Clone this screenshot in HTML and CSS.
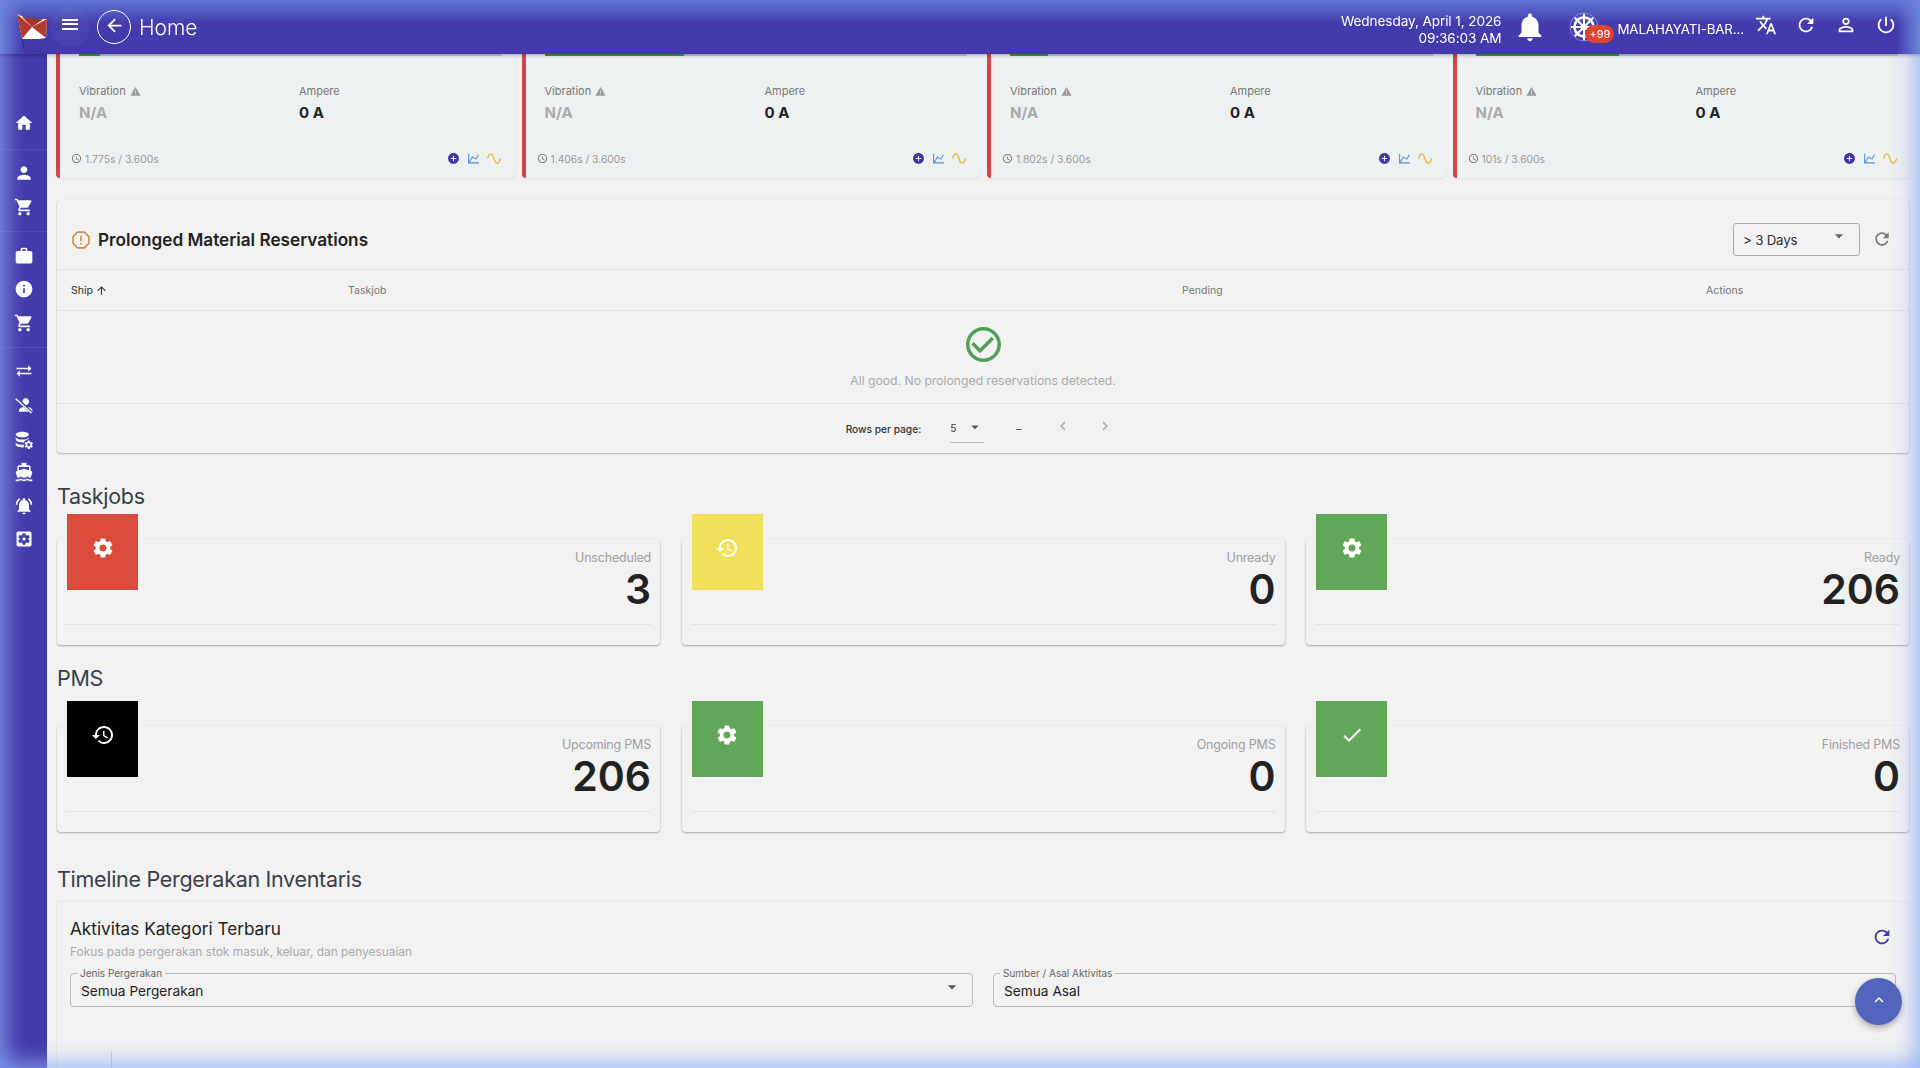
FILE: index.html
```html
<!DOCTYPE html>
<html lang="en">
<head>
    <meta charset="UTF-8">
    <meta name="viewport" content="width=device-width, initial-scale=1.0">
    <title>Home</title>
    <link rel="stylesheet" href="styles.css">
</head>
<body>

    <svg class="icon-sprite" width="0" height="0">
        <symbol id="i-home" viewBox="0 0 24 24"><path d="M10 20v-6h4v6h5v-8h3L12 3 2 12h3v8z"/></symbol>
        <symbol id="i-person" viewBox="0 0 24 24"><path d="M12 12c2.21 0 4-1.79 4-4s-1.79-4-4-4-4 1.79-4 4 1.79 4 4 4zm0 2c-2.67 0-8 1.34-8 4v2h16v-2c0-2.66-5.33-4-8-4z"/></symbol>
        <symbol id="i-cart" viewBox="0 0 24 24"><path d="M7 18c-1.1 0-1.99.9-1.99 2S5.9 22 7 22s2-.9 2-2-.9-2-2-2zM1 2v2h2l3.6 7.59-1.35 2.45c-.16.28-.25.61-.25.96 0 1.1.9 2 2 2h12v-2H7.42c-.14 0-.25-.11-.25-.25l.03-.12.9-1.63h7.45c.75 0 1.41-.41 1.75-1.03l3.58-6.49c.08-.14.12-.31.12-.48 0-.55-.45-1-1-1H5.21l-.94-2H1zm16 16c-1.1 0-1.99.9-1.99 2s.89 2 1.99 2 2-.9 2-2-.9-2-2-2z"/></symbol>
        <symbol id="i-work" viewBox="0 0 24 24"><path d="M20 6h-4V4c0-1.11-.89-2-2-2h-4c-1.11 0-2 .89-2 2v2H4c-1.11 0-1.99.89-1.99 2L2 19c0 1.11.89 2 2 2h16c1.11 0 2-.89 2-2V8c0-1.11-.89-2-2-2zm-6 0h-4V4h4v2z"/></symbol>
        <symbol id="i-info" viewBox="0 0 24 24"><path d="M12 2C6.48 2 2 6.48 2 12s4.48 10 10 10 10-4.48 10-10S17.52 2 12 2zm1 15h-2v-6h2v6zm0-8h-2V7h2v2z"/></symbol>
        <symbol id="i-swap" viewBox="0 0 24 24"><path d="M6.99 11L3 15l3.99 4v-3H21v-2H6.99v-3zM21 9l-3.99-4v3H3v2h14.01v3L21 9z"/></symbol>
        <symbol id="i-person-off" viewBox="0 0 24 24"><path d="M14 12c2.21 0 4-1.79 4-4s-1.79-4-4-4-4 1.79-4 4 1.79 4 4 4zm0 2c-2.67 0-8 1.34-8 4v2h16v-2c0-2.66-5.33-4-8-4z"/><path d="M3 4l18 17" stroke="#443aab" stroke-width="3.6"/><path d="M2 4.5l19 17" stroke="#fff" stroke-width="1.7"/></symbol>
        <symbol id="i-db-cog" viewBox="0 0 24 24"><path d="M10 2C5.6 2 2 3.6 2 5.5S5.6 9 10 9s8-1.6 8-3.5S14.4 2 10 2zM2 8v3.5C2 13.4 5.6 15 10 15c.7 0 1.4 0 2-.1.5-1.500 1.700-2.700 3.200-3.300.4-.1 2.800-.9 2.800-2.100V8c0 1.900-3.600 3.500-8 3.500S2 9.900 2 8zm0 6v3.500c0 1.900 3.600 3.500 8 3.500.6 0 1.200 0 1.800-.1-.2-1.100-.1-2.300.2-3.400-.7.1-1.300.1-2 .1-4.400 0-8-1.600-8-3.600z"/><g transform="translate(11.5 11.5) scale(.52)"><use href="#i-gear-raw"/></g></symbol>
        <symbol id="i-ferry" viewBox="0 0 24 24"><path d="M20 21c-1.39 0-2.78-.47-4-1.32-2.44 1.71-5.56 1.71-8 0C6.78 20.53 5.39 21 4 21H2v2h2c1.38 0 2.74-.35 4-.99 2.52 1.29 5.48 1.29 8 0 1.26.65 2.62.99 4 .99h2v-2h-2zM3.95 19H4c1.6 0 3.02-.88 4-2 .98 1.12 2.4 2 4 2s3.02-.88 4-2c.98 1.12 2.4 2 4 2h.05l1.89-6.68c.08-.26.06-.54-.06-.78s-.34-.42-.6-.5L20 10.62V6c0-1.1-.9-2-2-2h-3V1H9v3H6c-1.1 0-2 .9-2 2v4.62l-1.29.42c-.26.08-.48.26-.6.5s-.15.52-.06.78L3.95 19zM6 6h12v3.97L12 8 6 9.97V6z"/></symbol>
        <symbol id="i-bell-ring" viewBox="0 0 24 24"><path d="M7.58 4.08L6.15 2.65C3.75 4.48 2.17 7.3 2.03 10.5h2c.15-2.65 1.51-4.97 3.55-6.42zm12.39 6.42h2c-.15-3.2-1.73-6.02-4.12-7.85l-1.42 1.43c2.02 1.45 3.39 3.77 3.54 6.42zM18 11c0-3.07-1.64-5.64-4.5-6.32V4c0-.83-.67-1.5-1.5-1.5s-1.5.67-1.5 1.5v.68C7.63 5.36 6 7.92 6 11v5l-2 2v1h16v-1l-2-2v-5zm-6 11c.14 0 .27-.01.4-.04.65-.14 1.18-.58 1.44-1.18.1-.24.15-.5.15-.78h-4c.01 1.1.9 2 2.01 2z"/></symbol>
        <symbol id="i-settings-box" viewBox="0 0 24 24"><path d="M12 10c-1.1 0-2 .9-2 2s.9 2 2 2 2-.9 2-2-.9-2-2-2zm7-7H5c-1.11 0-2 .9-2 2v14c0 1.1.89 2 2 2h14c1.11 0 2-.9 2-2V5c0-1.1-.89-2-2-2zm-1.75 9c0 .23-.02.46-.05.68l1.48 1.16c.13.11.17.3.08.45l-1.4 2.42c-.09.15-.27.21-.43.15l-1.74-.7c-.36.28-.76.51-1.18.69l-.26 1.85c-.03.17-.18.3-.35.3h-2.8c-.17 0-.32-.13-.35-.29l-.26-1.85c-.43-.18-.82-.41-1.18-.69l-1.74.7c-.16.06-.34 0-.43-.15l-1.4-2.42c-.09-.15-.05-.34.08-.45l1.48-1.16c-.03-.23-.05-.46-.05-.69 0-.23.02-.46.05-.68l-1.48-1.16c-.13-.11-.17-.3-.08-.45l1.4-2.42c.09-.15.27-.21.43-.15l1.74.7c.36-.28.76-.51 1.18-.69l.26-1.85c.03-.17.18-.3.35-.3h2.8c.17 0 .32.13.35.29l.26 1.85c.43.18.82.41 1.18.69l1.74-.7c.16-.06.34 0 .43.15l1.4 2.42c.09.15.05.34-.08.45l-1.48 1.16c.03.23.05.46.05.69z"/></symbol>
        <symbol id="i-gear" viewBox="0 0 24 24"><path id="i-gear-raw" d="M19.14 12.94c.04-.3.06-.61.06-.94 0-.32-.02-.64-.07-.94l2.03-1.58c.18-.14.23-.41.12-.61l-1.92-3.32c-.12-.22-.37-.29-.59-.22l-2.39.96c-.5-.38-1.03-.7-1.62-.94l-.36-2.54c-.04-.24-.24-.41-.48-.41h-3.84c-.24 0-.43.17-.47.41l-.36 2.54c-.59.24-1.13.57-1.62.94l-2.39-.96c-.22-.08-.47 0-.59.22L2.74 8.87c-.12.21-.08.47.12.61l2.03 1.58c-.05.3-.09.63-.09.94s.02.64.07.94l-2.03 1.58c-.18.14-.23.41-.12.61l1.92 3.32c.12.22.37.29.59.22l2.39-.96c.5.38 1.03.7 1.62.94l.36 2.54c.05.24.24.41.48.41h3.84c.24 0 .44-.17.47-.41l.36-2.54c.59-.24 1.13-.56 1.62-.94l2.39.96c.22.08.47 0 .59-.22l1.92-3.32c.12-.22.07-.47-.12-.61l-2.01-1.58zM12 15.6c-1.98 0-3.6-1.62-3.6-3.6s1.62-3.6 3.6-3.6 3.6 1.62 3.6 3.6-1.62 3.6-3.6 3.6z"/></symbol>
        <symbol id="i-history" viewBox="0 0 24 24"><path d="M13 3c-4.97 0-9 4.03-9 9H1l3.89 3.89.07.14L9 12H6c0-3.87 3.13-7 7-7s7 3.13 7 7-3.13 7-7 7c-1.93 0-3.68-.79-4.94-2.06l-1.42 1.42C8.27 19.99 10.51 21 13 21c4.97 0 9-4.03 9-9s-4.03-9-9-9zm-1 5v5l4.28 2.54.72-1.21-3.5-2.08V8H12z"/></symbol>
        <symbol id="i-check" viewBox="0 0 24 24"><path d="M9 16.17L4.83 12l-1.42 1.41L9 19 21 7l-1.41-1.41z"/></symbol>
        <symbol id="i-refresh" viewBox="0 0 24 24"><path d="M17.65 6.35C16.2 4.9 14.21 4 12 4c-4.42 0-7.99 3.58-7.99 8s3.57 8 7.99 8c3.73 0 6.84-2.55 7.73-6h-2.08c-.82 2.33-3.04 4-5.65 4-3.31 0-6-2.69-6-6s2.69-6 6-6c1.66 0 3.14.69 4.22 1.78L13 11h7V4l-2.35 2.35z"/></symbol>
        <symbol id="i-warning" viewBox="0 0 24 24"><path d="M1 21h22L12 2 1 21zm12-3h-2v-2h2v2zm0-4h-2v-4h2v4z"/></symbol>
        <symbol id="i-clock" viewBox="0 0 24 24"><path d="M11.99 2C6.47 2 2 6.48 2 12s4.47 10 9.99 10C17.52 22 22 17.52 22 12S17.52 2 11.99 2zM12 20c-4.42 0-8-3.58-8-8s3.58-8 8-8 8 3.58 8 8-3.58 8-8 8zm.5-13H11v6l5.25 3.15.75-1.23-4.5-2.67z"/></symbol>
        <symbol id="i-add" viewBox="0 0 24 24"><path d="M12 2C6.48 2 2 6.48 2 12s4.48 10 10 10 10-4.48 10-10S17.52 2 12 2zm5 11h-4v4h-2v-4H7v-2h4V7h2v4h4v2z"/></symbol>
        <symbol id="i-chart" viewBox="0 0 24 24"><path d="M16 11.78L20.24 4.45l1.73 1-5.23 9.05-6.51-3.75L5.46 19H22v2H2V3h2v14.54L9.5 8z"/></symbol>
        <symbol id="i-wave" viewBox="0 0 24 24"><path d="M1 12c2.5-10 7-10 10 0s7.500 10 11 0" fill="none" stroke="currentColor" stroke-width="2.2"/></symbol>
        <symbol id="i-caret" viewBox="0 0 24 24"><path d="M7 10l5 5 5-5z"/></symbol>
    </svg>

    <header class="topbar">
        <div class="topbar-left">
            <svg class="logo" viewBox="0 0 30 36">
                <path d="M0 1L7 35" stroke="#2c2a86" stroke-width="1"/>
                <path d="M0 1l13 6 17-1-1 19-7 1H5z" fill="#fff"/>
                <path d="M0 1l15 13L5 26z" fill="#b23a2e"/>
                <path d="M30 6l-1 19-14-11z" fill="#b23a2e"/>
                <path d="M5 4l21 2.500L15 14z" fill="#a8362b"/>
            </svg>
            <button class="menu-btn"><span class="menu-lines"></span></button>
            <button class="back-btn">
                <svg viewBox="0 0 24 24" width="21" height="21"><path d="M20 11H7.83l5.59-5.59L12 4l-8 8 8 8 1.41-1.41L7.83 13H20v-2z"/></svg>
            </button>
            <span class="page-title">Home</span>
        </div>
        <div class="topbar-right">
            <div class="clock">Wednesday, April 1, 2026<br>09:36:03 AM</div>
            <svg class="bell" viewBox="0 0 24 24"><path d="M12 22c1.1 0 2-.9 2-2h-4c0 1.1.89 2 2 2zm6-6v-5c0-3.07-1.64-5.64-4.500-6.320V4c0-.83-.67-1.500-1.500-1.500s-1.500.67-1.500 1.500v.68C7.630 5.360 6 7.920 6 11v5l-2 2v1h16v-1l-2-2z"/></svg>
            <div class="ship-select">
                <span class="helm">
                    <svg viewBox="0 0 24 24" width="30" height="30" fill="none" stroke="#fff">
                        <circle cx="12" cy="12" r="7.6" stroke-width="2"/>
                        <circle cx="12" cy="12" r="2" fill="#fff" stroke="none"/>
                        <path d="M12 1.500v21M1.500 12h21M4.600 4.600l14.800 14.800M19.400 4.600L4.600 19.400" stroke-width="1.700"/>
                        <circle cx="12" cy="12" r="11.2" stroke-width=".5" opacity=".6"/>
                    </svg>
                    <span class="helm-badge">+99</span>
                </span>
                <span class="ship-name">MALAHAYATI-BAR...</span>
            </div>
            <div class="topbar-actions">
                <svg viewBox="0 0 24 24"><path d="M12.87 15.07l-2.54-2.51.03-.03c1.74-1.94 2.98-4.17 3.71-6.53H17V4h-7V2H8v2H1v1.99h11.17C11.5 7.92 10.44 9.75 9 11.35 8.07 10.32 7.3 9.19 6.69 8h-2c.73 1.63 1.73 3.17 2.98 4.56l-5.09 5.02L4 19l5-5 3.11 3.11.76-2.04zM18.5 10h-2L12 22h2l1.12-3h4.75L21 22h2l-4.5-12zm-2.62 7l1.62-4.33L19.12 17h-3.24z"/></svg>
                <svg><use href="#i-refresh"/></svg>
                <svg viewBox="0 0 24 24"><path d="M12 5.9c1.16 0 2.1.94 2.1 2.1s-.94 2.1-2.1 2.1S9.9 9.16 9.9 8s.94-2.1 2.1-2.1m0 9c2.97 0 6.1 1.46 6.1 2.1v1.1H5.9V17c0-.64 3.13-2.1 6.1-2.1M12 4C9.79 4 8 5.79 8 8s1.79 4 4 4 4-1.79 4-4-1.79-4-4-4zm0 9c-2.67 0-8 1.34-8 4v3h16v-3c0-2.66-5.33-4-8-4z"/></svg>
                <svg viewBox="0 0 24 24"><path d="M13 3h-2v10h2V3zm4.83 2.17l-1.42 1.42C17.99 7.86 19 9.81 19 12c0 3.87-3.13 7-7 7s-7-3.13-7-7c0-2.19 1.01-4.14 2.58-5.42L6.17 5.17C4.23 6.82 3 9.26 3 12c0 4.97 4.03 9 9 9s9-4.03 9-9c0-2.74-1.23-5.18-3.17-6.83z"/></svg>
            </div>
        </div>
    </header>

    <div class="layout">
        <nav class="sidebar">
            <div class="nav-group nav-home">
                <a class="nav-item"><svg><use href="#i-home"/></svg></a>
            </div>
            <div class="nav-group">
                <a class="nav-item"><svg><use href="#i-person"/></svg></a>
                <a class="nav-item"><svg><use href="#i-cart"/></svg></a>
            </div>
            <div class="nav-group">
                <a class="nav-item"><svg><use href="#i-work"/></svg></a>
                <a class="nav-item"><svg><use href="#i-info"/></svg></a>
                <a class="nav-item"><svg><use href="#i-cart"/></svg></a>
            </div>
            <div class="nav-group">
                <a class="nav-item"><svg><use href="#i-swap"/></svg></a>
                <a class="nav-item"><svg><use href="#i-person-off"/></svg></a>
                <a class="nav-item nav-db"><svg><use href="#i-db-cog"/></svg></a>
                <a class="nav-item"><svg><use href="#i-ferry"/></svg></a>
                <a class="nav-item"><svg><use href="#i-bell-ring"/></svg></a>
                <a class="nav-item"><svg><use href="#i-settings-box"/></svg></a>
            </div>
        </nav>

        <main class="content">
            <section class="sensor-grid">
                <div class="sensor-card">
                    <div class="sensor-track"><div class="sensor-fill" style="width: 5%"></div></div>
                    <div class="sensor-row">
                        <div class="sensor-col">
                            <span class="sensor-label">Vibration <svg><use href="#i-warning"/></svg></span>
                            <span class="sensor-value muted">N/A</span>
                        </div>
                        <div class="sensor-col">
                            <span class="sensor-label">Ampere</span>
                            <span class="sensor-value">0 A</span>
                        </div>
                    </div>
                    <div class="sensor-foot">
                        <span class="sensor-time"><svg><use href="#i-clock"/></svg>1.775s / 3.600s</span>
                        <span class="sensor-tools">
                            <svg class="tool-add"><use href="#i-add"/></svg>
                            <svg class="tool-chart"><use href="#i-chart"/></svg>
                            <svg class="tool-wave"><use href="#i-wave"/></svg>
                        </span>
                    </div>
                </div>
                <div class="sensor-card">
                    <div class="sensor-track"><div class="sensor-fill" style="width: 33%"></div></div>
                    <div class="sensor-row">
                        <div class="sensor-col">
                            <span class="sensor-label">Vibration <svg><use href="#i-warning"/></svg></span>
                            <span class="sensor-value muted">N/A</span>
                        </div>
                        <div class="sensor-col">
                            <span class="sensor-label">Ampere</span>
                            <span class="sensor-value">0 A</span>
                        </div>
                    </div>
                    <div class="sensor-foot">
                        <span class="sensor-time"><svg><use href="#i-clock"/></svg>1.406s / 3.600s</span>
                        <span class="sensor-tools">
                            <svg class="tool-add"><use href="#i-add"/></svg>
                            <svg class="tool-chart"><use href="#i-chart"/></svg>
                            <svg class="tool-wave"><use href="#i-wave"/></svg>
                        </span>
                    </div>
                </div>
                <div class="sensor-card">
                    <div class="sensor-track"><div class="sensor-fill" style="width: 9%"></div></div>
                    <div class="sensor-row">
                        <div class="sensor-col">
                            <span class="sensor-label">Vibration <svg><use href="#i-warning"/></svg></span>
                            <span class="sensor-value muted">N/A</span>
                        </div>
                        <div class="sensor-col">
                            <span class="sensor-label">Ampere</span>
                            <span class="sensor-value">0 A</span>
                        </div>
                    </div>
                    <div class="sensor-foot">
                        <span class="sensor-time"><svg><use href="#i-clock"/></svg>1.802s / 3.600s</span>
                        <span class="sensor-tools">
                            <svg class="tool-add"><use href="#i-add"/></svg>
                            <svg class="tool-chart"><use href="#i-chart"/></svg>
                            <svg class="tool-wave"><use href="#i-wave"/></svg>
                        </span>
                    </div>
                </div>
                <div class="sensor-card">
                    <div class="sensor-track"><div class="sensor-fill" style="width: 34%"></div></div>
                    <div class="sensor-row">
                        <div class="sensor-col">
                            <span class="sensor-label">Vibration <svg><use href="#i-warning"/></svg></span>
                            <span class="sensor-value muted">N/A</span>
                        </div>
                        <div class="sensor-col">
                            <span class="sensor-label">Ampere</span>
                            <span class="sensor-value">0 A</span>
                        </div>
                    </div>
                    <div class="sensor-foot">
                        <span class="sensor-time"><svg><use href="#i-clock"/></svg>101s / 3.600s</span>
                        <span class="sensor-tools">
                            <svg class="tool-add"><use href="#i-add"/></svg>
                            <svg class="tool-chart"><use href="#i-chart"/></svg>
                            <svg class="tool-wave"><use href="#i-wave"/></svg>
                        </span>
                    </div>
                </div>
            </section>

            <section class="reservations">
                <div class="res-head">
                    <div class="res-title">
                        <svg viewBox="0 0 24 24" width="20" height="20" fill="none" stroke="#dd8a45" stroke-width="2">
                            <path d="M8 2.5h8l5.5 5.5v8L16 21.5H8L2.5 16V8z"/>
                            <path d="M12 7v6.5M12 15.5v2"/>
                        </svg>
                        <h3>Prolonged Material Reservations</h3>
                    </div>
                    <div class="res-controls">
                        <div class="days-select">&gt; 3 Days<svg><use href="#i-caret"/></svg></div>
                        <svg class="res-refresh"><use href="#i-refresh"/></svg>
                    </div>
                </div>
                <div class="res-columns">
                    <span class="col-active">Ship <svg viewBox="0 0 24 24"><path d="M4 12l1.41 1.41L11 7.83V20h2V7.83l5.58 5.59L20 12l-8-8-8 8z"/></svg></span>
                    <span>Taskjob</span>
                    <span>Pending</span>
                    <span>Actions</span>
                </div>
                <div class="res-empty">
                    <svg viewBox="2 2 20 20" width="35" height="35"><path d="M16.59 7.58L10 14.17l-3.59-3.58L5 12l5 5 8-8zM12 2C6.48 2 2 6.48 2 12s4.48 10 10 10 10-4.48 10-10S17.52 2 12 2zm0 18c-4.42 0-8-3.58-8-8s3.58-8 8-8 8 3.58 8 8-3.58 8-8 8z"/></svg>
                    <p>All good. No prolonged reservations detected.</p>
                </div>
                <div class="res-foot">
                    <span class="rows-label">Rows per page:</span>
                    <span class="rows-select">5<svg><use href="#i-caret"/></svg></span>
                    <span class="rows-range">–</span>
                    <svg class="page-arrow" viewBox="0 0 24 24"><path d="M15.41 7.41L14 6l-6 6 6 6 1.41-1.41L10.83 12z"/></svg>
                    <svg class="page-arrow" viewBox="0 0 24 24"><path d="M10 6L8.59 7.41 13.17 12l-4.58 4.59L10 18l6-6z"/></svg>
                </div>
            </section>

            <h2 class="section-title taskjobs-title">Taskjobs</h2>
            <section class="stat-grid">
                <div class="stat-card">
                    <div class="stat-icon red"><svg><use href="#i-gear"/></svg></div>
                    <div class="stat-text"><span class="stat-label">Unscheduled</span><span class="stat-value">3</span></div>
                    <div class="stat-line"></div>
                </div>
                <div class="stat-card">
                    <div class="stat-icon yellow"><svg><use href="#i-history"/></svg></div>
                    <div class="stat-text"><span class="stat-label">Unready</span><span class="stat-value">0</span></div>
                    <div class="stat-line"></div>
                </div>
                <div class="stat-card">
                    <div class="stat-icon green"><svg><use href="#i-gear"/></svg></div>
                    <div class="stat-text"><span class="stat-label">Ready</span><span class="stat-value">206</span></div>
                    <div class="stat-line"></div>
                </div>
            </section>

            <h2 class="section-title pms-title">PMS</h2>
            <section class="stat-grid pms-grid">
                <div class="stat-card">
                    <div class="stat-icon black"><svg><use href="#i-history"/></svg></div>
                    <div class="stat-text"><span class="stat-label">Upcoming PMS</span><span class="stat-value">206</span></div>
                    <div class="stat-line"></div>
                </div>
                <div class="stat-card">
                    <div class="stat-icon green"><svg><use href="#i-gear"/></svg></div>
                    <div class="stat-text"><span class="stat-label">Ongoing PMS</span><span class="stat-value">0</span></div>
                    <div class="stat-line"></div>
                </div>
                <div class="stat-card">
                    <div class="stat-icon green"><svg><use href="#i-check"/></svg></div>
                    <div class="stat-text"><span class="stat-label">Finished PMS</span><span class="stat-value">0</span></div>
                    <div class="stat-line"></div>
                </div>
            </section>

            <h2 class="section-title timeline-title">Timeline Pergerakan Inventaris</h2>
            <section class="timeline-card">
                <div class="timeline-head">
                    <div>
                        <h3>Aktivitas Kategori Terbaru</h3>
                        <p>Fokus pada pergerakan stok masuk, keluar, dan penyesuaian</p>
                    </div>
                    <svg class="timeline-refresh"><use href="#i-refresh"/></svg>
                </div>
                <div class="timeline-filters">
                    <div class="outlined-select">
                        <span class="float-label">Jenis Pergerakan</span>
                        Semua Pergerakan
                        <svg><use href="#i-caret"/></svg>
                    </div>
                    <div class="outlined-select">
                        <span class="float-label">Sumber / Asal Aktivitas</span>
                        Semua Asal
                    </div>
                </div>
                <div class="timeline-axis"></div>
            </section>
        </main>
    </div>

    <button class="fab"><svg viewBox="0 0 24 24"><path d="M7.41 15.41L12 10.83l4.59 4.58L18 14l-6-6-6 6z"/></svg></button>
    <div class="edge-glow"></div>

</body>
</html>
```

FILE: styles.css
```css
* {
    box-sizing: border-box;
}
html, body {
    height: 100%;
}
body {
    margin: 0;
    height: 100vh;
    overflow: hidden;
    display: flex;
    flex-direction: column;
    font-family: Inter, "Noto Sans", sans-serif;
    background: #f2f2f2;
    color: #222;
}
h2, h3, p {
    margin: 0;
    font-weight: 400;
}
button {
    border: none;
    background: none;
    padding: 0;
    color: inherit;
}
.icon-sprite {
    position: absolute;
}

/* top bar */
.topbar {
    position: relative;
    z-index: 8;
    flex: 0 0 54px;
    display: flex;
    justify-content: space-between;
    align-items: center;
    background:
        linear-gradient(90deg, #6d84dc, rgba(109, 132, 220, 0) 24px, rgba(109, 132, 220, 0) calc(100% - 24px), #6d84dc),
        linear-gradient(#6075d3, #443aab 24px);
    color: #fff;
    box-shadow: 0 1px 4px rgba(0, 0, 0, 0.35);
}
.topbar-left {
    display: flex;
    align-items: center;
    padding-left: 17px;
}
.logo {
    width: 30px;
    height: 36px;
    align-self: flex-start;
    margin-top: 8px;
}
.menu-btn {
    width: 40px;
    height: 40px;
    margin-left: 3px;
    border-radius: 50%;
    background: rgba(255, 255, 255, 0.04);
    display: flex;
    align-items: center;
    justify-content: center;
}
.menu-lines {
    width: 16px;
    height: 11px;
    margin-top: -6px;
    border-top: 2px solid #fff;
    border-bottom: 2px solid #fff;
    background: linear-gradient(#fff, #fff) center / 100% 2px no-repeat;
}
.back-btn {
    width: 34px;
    height: 34px;
    margin-left: 7px;
    border: 1px solid #fff;
    border-radius: 50%;
    display: flex;
    align-items: center;
    justify-content: center;
}
.back-btn svg {
    fill: #fff;
    margin-top: -4px;
}
.page-title {
    margin-left: 8px;
    font-size: 21px;
    font-weight: 300;
}
.topbar-right {
    display: flex;
    align-items: center;
    padding-right: 23px;
}
.clock {
    padding-top: 5px;
    font-size: 13.6px;
    line-height: 17px;
    text-align: right;
    letter-spacing: -0.1px;
}
.bell {
    width: 34px;
    height: 34px;
    margin-left: 12px;
    fill: #fff;
}
.ship-select {
    display: flex;
    align-items: center;
    margin-left: 22px;
}
.helm {
    position: relative;
    display: flex;
    width: 30px;
    height: 30px;
}
.helm-badge {
    position: absolute;
    left: 16px;
    top: 13px;
    width: 29px;
    height: 18px;
    border-radius: 9px;
    background: #dc4433;
    font-size: 11px;
    line-height: 18px;
    text-align: center;
}
.ship-name {
    margin-left: 18px;
    font-size: 13.3px;
    letter-spacing: -0.1px;
    padding-top: 3px;
}
.topbar-actions {
    display: flex;
    align-items: center;
    gap: 18px;
    margin-left: 11px;
    margin-top: -4px;
}
.topbar-actions svg {
    width: 22px;
    height: 22px;
    fill: #fff;
}

/* side nav */
.layout {
    flex: 1;
    display: flex;
    min-height: 0;
}
.sidebar {
    flex: 0 0 47px;
    background: #443aab;
    padding-top: 52px;
}
.nav-group {
    padding: 7px 0;
    border-top: 1px solid rgba(255, 255, 255, 0.08);
}
.nav-group:first-child {
    border-top: none;
    padding: 0 0 9px;
}
.nav-item {
    display: flex;
    align-items: center;
    justify-content: center;
    height: 33.6px;
    color: #fff;
}
.nav-item svg {
    width: 20px;
    height: 20px;
    fill: #fff;
}
.nav-db svg {
    margin-top: 3px;
}

/* main column */
.content {
    flex: 1;
    min-width: 0;
    padding: 0 11px 0 10px;
    overflow: hidden;
}

/* sensor cards */
.sensor-grid {
    display: grid;
    grid-template-columns: repeat(4, minmax(0, 1fr));
    gap: 6px;
    margin: 0 -3px 0 -1px;
}
.sensor-card {
    height: 124px;
    padding: 0 14px 0 19px;
    background: #eef1f1;
    border-left: 4px solid #d64545;
    border-radius: 0 0 6px 4px;
    box-shadow: 0 1px 2px rgba(0, 0, 0, 0.08);
}
.sensor-track {
    height: 2px;
    background: #c9cdcd;
}
.sensor-fill {
    height: 100%;
    background: #3f9a45;
}
.sensor-row {
    display: flex;
    padding-top: 28px;
}
.sensor-col {
    width: 220px;
    display: flex;
    flex-direction: column;
}
.sensor-col:last-child {
    flex: 1;
}
.sensor-label {
    font-size: 11px;
    line-height: 14px;
    color: #777;
    display: flex;
    align-items: center;
    gap: 4px;
}
.sensor-label svg {
    width: 11px;
    height: 11px;
    fill: #999;
}
.sensor-value {
    margin-top: 6px;
    font-size: 15px;
    line-height: 18px;
    font-weight: 700;
    color: #222;
}
.sensor-value.muted {
    color: #aaa;
}
.sensor-foot {
    display: flex;
    justify-content: space-between;
    align-items: center;
    margin: 29px 0 0 -8px;
}
.sensor-time {
    display: flex;
    align-items: center;
    gap: 3px;
    font-size: 10.3px;
    color: #999;
}
.sensor-time svg {
    width: 11px;
    height: 11px;
    fill: #777;
}
.sensor-tools {
    display: flex;
    align-items: center;
    gap: 7px;
}
.sensor-tools svg {
    width: 13px;
    height: 13px;
}
.sensor-tools .tool-wave {
    width: 15px;
    height: 15px;
}
.tool-add {
    fill: #3f35a5;
}
.tool-chart {
    fill: #4f8fe0;
}
.tool-wave {
    color: #e8b93a;
}

/* prolonged reservations */
.reservations {
    margin-top: 22px;
    background: #f2f2f2;
    border-radius: 4px;
    box-shadow: 0 1px 2px rgba(0, 0, 0, 0.25), 0 0 2px rgba(0, 0, 0, 0.06);
}
.res-head {
    height: 70px;
    display: flex;
    justify-content: space-between;
    align-items: center;
    padding: 10px 17px 0 14px;
    border-bottom: 1px solid #e2e2e2;
}
.res-title {
    display: flex;
    align-items: center;
    gap: 7px;
}
.res-title h3 {
    font-size: 17.2px;
    font-weight: 600;
    color: #222;
}
.res-controls {
    display: flex;
    align-items: center;
    gap: 12px;
}
.days-select {
    width: 127px;
    height: 33px;
    padding: 0 10px 0 9px;
    display: flex;
    align-items: center;
    justify-content: space-between;
    border: 1px solid #aaa;
    border-radius: 3px;
    font-size: 13.3px;
    letter-spacing: -0.2px;
    color: #333;
}
.days-select svg {
    width: 20px;
    height: 20px;
    fill: #666;
    margin-top: -8px;
}
.res-refresh {
    width: 20px;
    height: 20px;
    fill: #777;
    margin-top: -2px;
}
.res-columns {
    height: 41px;
    display: grid;
    grid-template-columns: 277px 834px 524px 1fr;
    align-items: center;
    padding-left: 14px;
    border-bottom: 1px solid #e2e2e2;
    font-size: 10.5px;
    color: #777;
}
.col-active {
    display: flex;
    align-items: center;
    gap: 2px;
    color: #333;
}
.col-active svg {
    width: 13px;
    height: 13px;
    fill: #333;
}
.res-empty {
    height: 93px;
    border-bottom: 1px solid #e2e2e2;
    padding-top: 16px;
    display: flex;
    flex-direction: column;
    align-items: center;
}
.res-empty svg {
    fill: #52a056;
}
.res-empty p {
    margin-top: 11px;
    font-size: 12.2px;
    color: #aaa;
}
.res-foot {
    height: 49px;
    display: flex;
    align-items: center;
    justify-content: center;
    padding-right: 6px;
    font-size: 10.2px;
    color: #333;
}
.rows-label {
    font-weight: 500;
}
.rows-select {
    width: 34px;
    height: 28px;
    margin: 1px 0 0 29px;
    padding-top: 7px;
    display: flex;
    justify-content: space-between;
    border-bottom: 1px solid #bbb;
}
.rows-select svg {
    width: 18px;
    height: 18px;
    fill: #555;
    margin-top: -4px;
}
.rows-range {
    margin-left: 32px;
}
.page-arrow {
    width: 18px;
    height: 18px;
    fill: #aaa;
    margin: -6px 0 0 33px;
}
.page-arrow:last-child {
    margin-left: 24px;
}

/* stat cards */
.section-title {
    font-size: 21.5px;
    line-height: 28px;
    font-weight: 400;
    color: #3a3f4a;
    letter-spacing: -0.3px;
}
.taskjobs-title {
    margin-top: 29px;
}
.pms-title {
    margin-top: 19px;
}
.timeline-title {
    margin-top: 33px;
}
.stat-grid {
    display: grid;
    grid-template-columns: repeat(3, 1fr);
    gap: 21.5px;
    padding-top: 29px;
}
.pms-grid {
    padding-top: 34px;
}
.stat-card {
    position: relative;
    height: 106px;
    padding: 0 9px;
    background: #f2f2f2;
    border-radius: 4px;
    box-shadow: 0 1px 2px rgba(0, 0, 0, 0.3), 0 0 2px rgba(0, 0, 0, 0.05);
}
.stat-icon {
    position: absolute;
    left: 10px;
    top: -25px;
    width: 71px;
    height: 76px;
    display: flex;
    justify-content: center;
    padding-top: 22px;
}
.stat-icon svg {
    width: 24px;
    height: 24px;
    fill: #fff;
}
.stat-icon.red {
    background: #da4b3c;
}
.stat-icon.yellow {
    background: #f0e05c;
}
.stat-icon.green {
    background: #62a65a;
}
.stat-icon.black {
    background: #000;
}
.stat-text {
    height: 85px;
    display: flex;
    flex-direction: column;
    align-items: flex-end;
    padding-top: 10px;
}
.stat-label {
    font-size: 12.5px;
    line-height: 17px;
    letter-spacing: -0.2px;
    color: #a0a0a0;
}
.stat-value {
    font-size: 41px;
    line-height: 46px;
    font-weight: 600;
    color: #222;
}
.stat-line {
    height: 1px;
    background: #e4e4e4;
}

/* inventory timeline */
.timeline-card {
    position: relative;
    margin-top: 9px;
    height: 180px;
    padding: 16px 13px;
    background: #f2f2f2;
    border-radius: 4px;
    box-shadow: 0 0 2px rgba(0, 0, 0, 0.15);
}
.timeline-head {
    display: flex;
    justify-content: space-between;
    align-items: center;
}
.timeline-head h3 {
    font-size: 17.2px;
    line-height: 22px;
    color: #222;
}
.timeline-head p {
    margin-top: 3px;
    font-size: 11.9px;
    line-height: 18px;
    color: #aaa;
}
.timeline-refresh {
    width: 22px;
    height: 22px;
    fill: #4338a8;
    margin: -6px 3px 0 0;
}
.timeline-filters {
    display: grid;
    grid-template-columns: 1fr 1fr;
    gap: 20px;
    margin-top: 12px;
}
.outlined-select {
    position: relative;
    height: 34px;
    display: flex;
    align-items: center;
    padding: 2px 10px 0;
    border: 1px solid #bbb;
    border-radius: 4px;
    font-size: 13.7px;
    color: #222;
}
.outlined-select svg {
    position: absolute;
    right: 10px;
    top: 3px;
    width: 20px;
    height: 20px;
    fill: #555;
}
.float-label {
    position: absolute;
    left: 6px;
    top: -6px;
    padding: 0 3px;
    background: #f2f2f2;
    font-size: 10px;
    line-height: 11px;
    color: #666;
}
.timeline-axis {
    position: absolute;
    left: 54px;
    top: 150px;
    width: 1px;
    height: 30px;
    background: #ccc;
}

/* overlays */
.fab {
    position: fixed;
    left: 1855px;
    top: 978px;
    z-index: 6;
    width: 47px;
    height: 47px;
    border-radius: 50%;
    background: #5264bb;
    box-shadow: 0 3px 6px rgba(0, 0, 0, 0.3);
    display: flex;
    align-items: center;
    justify-content: center;
}
.fab svg {
    width: 18px;
    height: 18px;
    fill: #fff;
    margin-top: -4px;
}
.edge-glow {
    position: fixed;
    inset: 0;
    z-index: 7;
    pointer-events: none;
    box-shadow: inset 0 0 22px 5px rgba(140, 170, 245, 0.85);
}
```
